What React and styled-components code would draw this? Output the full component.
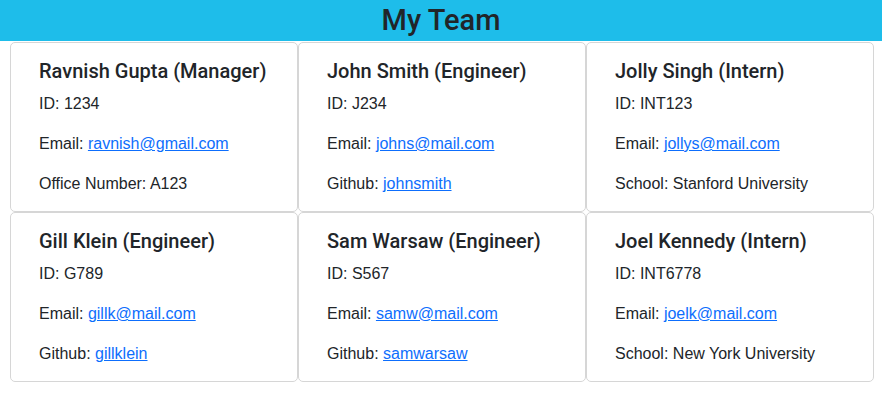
import styled, { createGlobalStyle } from "styled-components";

const team = [
  {
    name: "Ravnish Gupta",
    role: "Manager",
    id: "1234",
    email: "ravnish@gmail.com",
    extra: { label: "Office Number", value: "A123" },
  },
  {
    name: "John Smith",
    role: "Engineer",
    id: "J234",
    email: "johns@mail.com",
    extra: { label: "Github", value: "johnsmith", link: true },
  },
  {
    name: "Jolly Singh",
    role: "Intern",
    id: "INT123",
    email: "jollys@mail.com",
    extra: { label: "School", value: "Stanford University" },
  },
  {
    name: "Gill Klein",
    role: "Engineer",
    id: "G789",
    email: "gillk@mail.com",
    extra: { label: "Github", value: "gillklein", link: true },
  },
  {
    name: "Sam Warsaw",
    role: "Engineer",
    id: "S567",
    email: "samw@mail.com",
    extra: { label: "Github", value: "samwarsaw", link: true },
  },
  {
    name: "Joel Kennedy",
    role: "Intern",
    id: "INT6778",
    email: "joelk@mail.com",
    extra: { label: "School", value: "New York University" },
  },
];

export default function App() {
  return (
    <>
      <GlobalStyle />
      <Header>
        <Title>My Team</Title>
      </Header>
      <Grid>
        {team.map((m) => (
          <Card key={m.id}>
            <Name>
              {m.name} ({m.role})
            </Name>
            <Line>ID: {m.id}</Line>
            <Line>
              Email: <a href={`mailto:${m.email}`}>{m.email}</a>
            </Line>
            <Line>
              {m.extra.label}:{" "}
              {m.extra.link ? (
                <a href={`https://github.com/${m.extra.value}`}>
                  {m.extra.value}
                </a>
              ) : (
                m.extra.value
              )}
            </Line>
          </Card>
        ))}
      </Grid>
    </>
  );
}

const GlobalStyle = createGlobalStyle`
  body {
    margin: 0;
    background: #ffffff;
    color: #212529;
    font-family: "Liberation Sans", Arial, sans-serif;
    font-size: 16px;
  }
`;

const Header = styled.header`
  background: #1ebdea;
  height: 41px;
  display: flex;
  align-items: center;
  justify-content: center;
`;

const Title = styled.h1`
  margin: 0;
  font-family: Roboto, "Liberation Sans", sans-serif;
  font-size: 29px;
  font-weight: 500;
  line-height: 1.2;
  color: #212529;
`;

const Grid = styled.main`
  display: grid;
  grid-template-columns: repeat(3, 288px);
  padding: 1px 8px 0 10px;
`;

const Card = styled.section`
  border: 1px solid #d6d6d6;
  border-radius: 5px;
  padding: 16px 28px 15px;
`;

const Name = styled.h5`
  margin: 0 0 9px;
  font-family: Roboto, "Liberation Sans", sans-serif;
  font-size: 20px;
  font-weight: 500;
  line-height: 24px;
`;

const Line = styled.p`
  margin: 0 0 16px;
  font-size: 16px;
  line-height: 24px;

  &:last-child {
    margin-bottom: 0;
  }

  a {
    color: #0d6efd;
    text-decoration: underline;
  }
`;
